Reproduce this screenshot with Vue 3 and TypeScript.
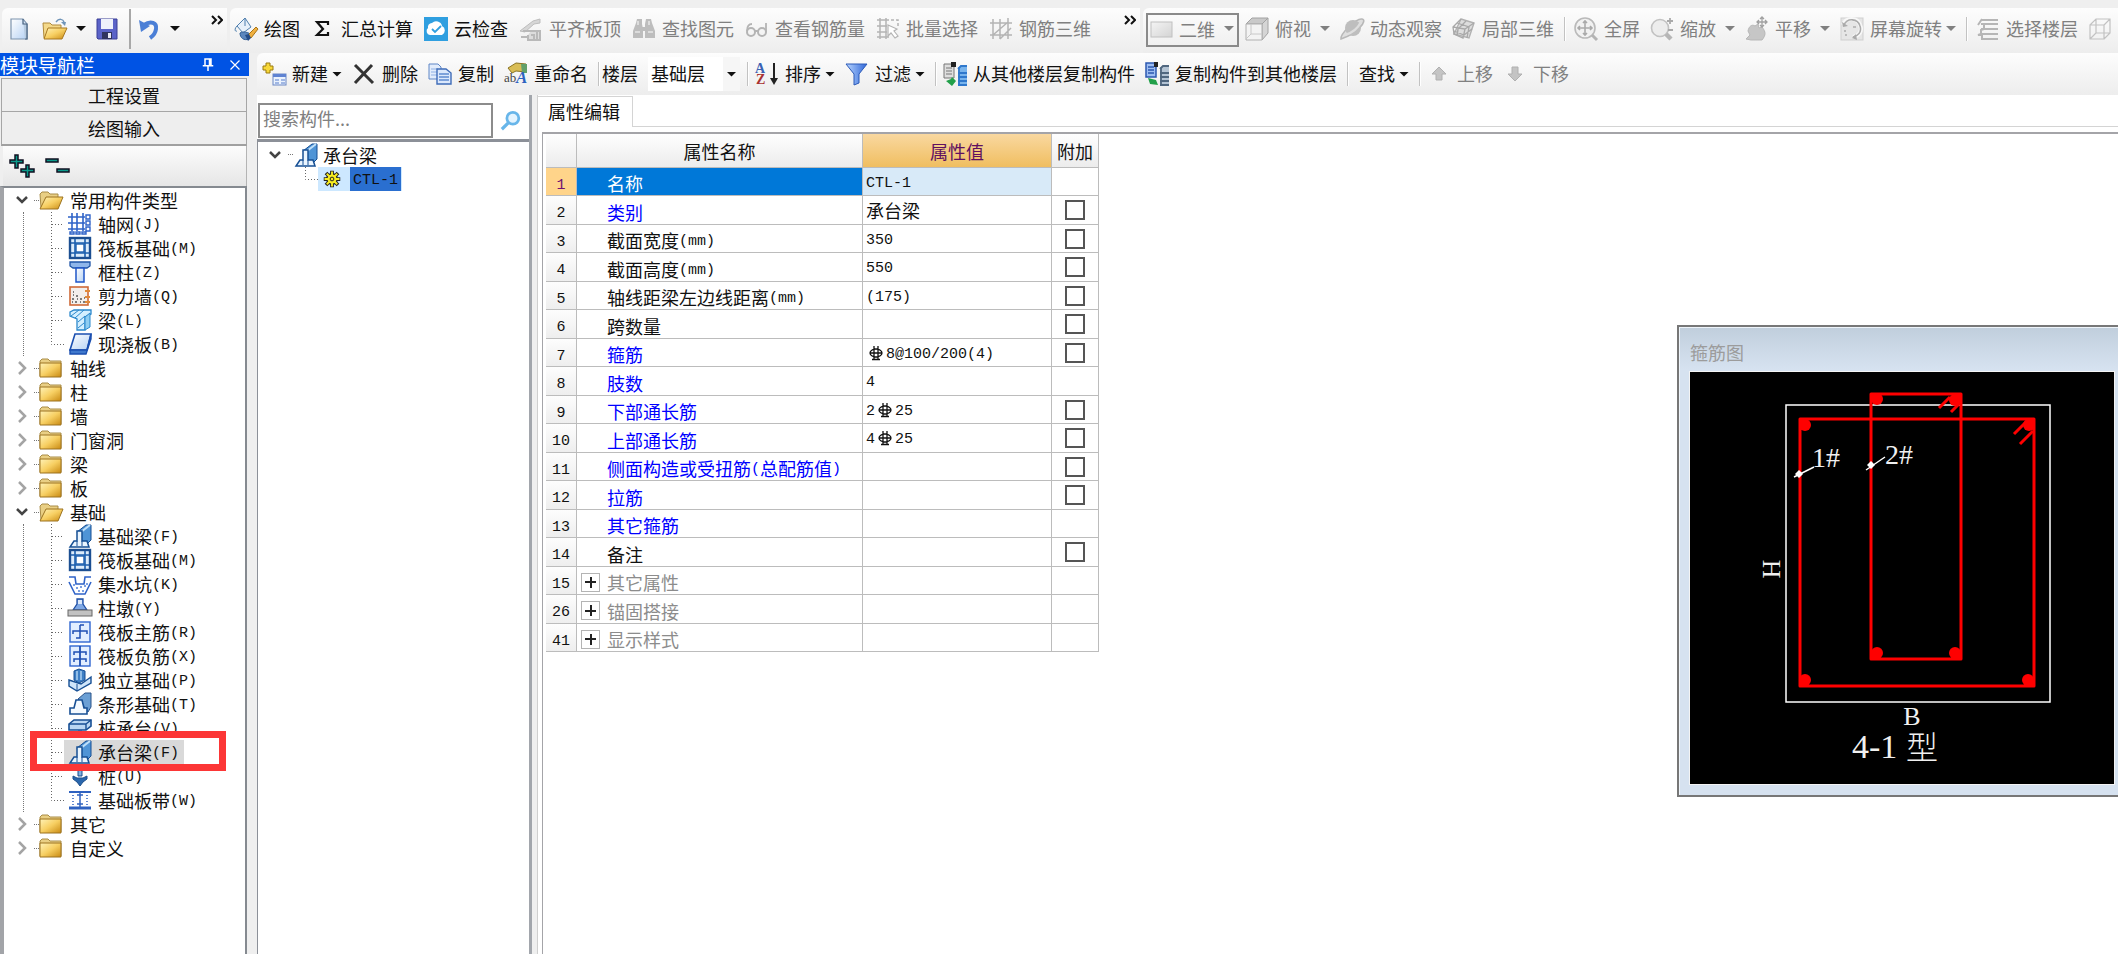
<script setup lang="ts">
import { ref } from 'vue'

interface Tool {
  kind: 'item' | 'sep' | 'floor' | 'view'
  label?: string
  icon?: string
  off?: boolean
  caret?: 'wide' | 'tight'
}
interface Leaf { label: string; icon: string; selected?: boolean }
interface Group { label: string; open?: boolean; children?: Leaf[] }
interface Prop {
  no: number
  name: string
  value?: string
  tone?: 'blue' | 'gray'
  check?: boolean
  expand?: boolean
}

const item = (label: string, icon = '', off = false, caret?: 'wide' | 'tight'): Tool => ({ kind: 'item', label, icon, off, caret })
const sep: Tool = { kind: 'sep' }

const drawTools: Tool[] = [
  item('绘图', 'paint'),
  item('汇总计算', 'sigma'),
  item('云检查', 'cloud'),
  item('平齐板顶', 'level', true),
  item('查找图元', 'binoculars', true),
  item('查看钢筋量', 'glasses', true),
  item('批量选择', 'batch', true),
  item('钢筋三维', 'mesh', true),
]
const viewTools: Tool[] = [
  { kind: 'view' },
  item('俯视', 'cubeTop', true, 'wide'),
  item('动态观察', 'orbit', true),
  item('局部三维', 'rubik', true),
  sep,
  item('全屏', 'full', true),
  item('缩放', 'zoom', true, 'wide'),
  item('平移', 'hand', true, 'wide'),
  item('屏幕旋转', 'rotate', true, 'tight'),
  sep,
  item('选择楼层', 'floors', true),
  item('线框', 'cubeWire', true),
]
const componentTools: Tool[] = [
  item('新建', 'create', false, 'tight'),
  item('删除', 'remove'),
  item('复制', 'copy'),
  item('重命名', 'rename'),
  sep,
  { kind: 'floor' },
  sep,
  item('排序', 'sort', false, 'tight'),
  item('过滤', 'filter', false, 'tight'),
  sep,
  item('从其他楼层复制构件', 'copyFrom'),
  item('复制构件到其他楼层', 'copyTo'),
  sep,
  item('查找', '', false, 'tight'),
  sep,
  item('上移', 'up', true),
  item('下移', 'down', true),
]

const groups: Group[] = [
  {
    label: '常用构件类型', open: true, children: [
      { label: '轴网(J)', icon: 'axis' },
      { label: '筏板基础(M)', icon: 'raft' },
      { label: '框柱(Z)', icon: 'column' },
      { label: '剪力墙(Q)', icon: 'wall' },
      { label: '梁(L)', icon: 'beam' },
      { label: '现浇板(B)', icon: 'slab' },
    ],
  },
  { label: '轴线' },
  { label: '柱' },
  { label: '墙' },
  { label: '门窗洞' },
  { label: '梁' },
  { label: '板' },
  {
    label: '基础', open: true, children: [
      { label: '基础梁(F)', icon: 'capBeam' },
      { label: '筏板基础(M)', icon: 'raft' },
      { label: '集水坑(K)', icon: 'sump' },
      { label: '柱墩(Y)', icon: 'pier' },
      { label: '筏板主筋(R)', icon: 'mainBar' },
      { label: '筏板负筋(X)', icon: 'negBar' },
      { label: '独立基础(P)', icon: 'pad' },
      { label: '条形基础(T)', icon: 'strip' },
      { label: '桩承台(V)', icon: 'pileCap' },
      { label: '承台梁(F)', icon: 'capBeam', selected: true },
      { label: '桩(U)', icon: 'pile' },
      { label: '基础板带(W)', icon: 'band' },
    ],
  },
  { label: '其它' },
  { label: '自定义' },
]

const props: Prop[] = [
  { no: 1, name: '名称', value: 'CTL-1' },
  { no: 2, name: '类别', value: '承台梁', tone: 'blue', check: true },
  { no: 3, name: '截面宽度(mm)', value: '350', check: true },
  { no: 4, name: '截面高度(mm)', value: '550', check: true },
  { no: 5, name: '轴线距梁左边线距离(mm)', value: '(175)', check: true },
  { no: 6, name: '跨数量', check: true },
  { no: 7, name: '箍筋', value: '~8@100/200(4)', tone: 'blue', check: true },
  { no: 8, name: '肢数', value: '4', tone: 'blue' },
  { no: 9, name: '下部通长筋', value: '2~25', tone: 'blue', check: true },
  { no: 10, name: '上部通长筋', value: '4~25', tone: 'blue', check: true },
  { no: 11, name: '侧面构造或受扭筋(总配筋值)', tone: 'blue', check: true },
  { no: 12, name: '拉筋', tone: 'blue', check: true },
  { no: 13, name: '其它箍筋', tone: 'blue' },
  { no: 14, name: '备注', check: true },
  { no: 15, name: '其它属性', tone: 'gray', expand: true },
  { no: 26, name: '锚固搭接', tone: 'gray', expand: true },
  { no: 41, name: '显示样式', tone: 'gray', expand: true },
]

const keyword = ref('')
const floor = ref('基础层')
const view = ref('二维')

/** Splits a label into wide, half-width and rebar-mark ("~") runs. */
function runs(text = ''): { text: string; type: 'wide' | 'half' | 'bar' }[] {
  return text.split(/(~|[!-}]+)/).filter(Boolean).map(part => ({
    text: part,
    type: part === '~' ? 'bar' : /^[!-}]/.test(part) ? 'half' : 'wide',
  }))
}

const g = 'fill="none" stroke="#b4b4b4" stroke-width="1.5"'

const icons: Record<string, string> = {
  newDoc: '<path d="M4 2h12l4 5v15H4z" fill="url(#gPage)" stroke="#7c93ad" stroke-width="1.2"/><path d="M16 2v5h4v15h-2" fill="#b7cbe0" stroke="#47617f" stroke-width="1.2"/>',
  open: '<path d="M0 6h7l2 2h9v13H1z" fill="#f4d98a" stroke="#b08a3a"/><path d="M5 11h19l-5 11H1z" fill="url(#gGold)" stroke="#a87820"/><path d="M13 5c3-4 7-3 8 0" fill="none" stroke="#6f94b8" stroke-width="1.5"/><path d="M18 5h5l-1 4z" fill="#6f94b8"/>',
  save: '<path d="M2 2h20v20H3l-1-1z" fill="#5b63c8" stroke="#3a3f96"/><rect x="6" y="2" width="12" height="10" fill="#eef1fb"/><path d="M7 15h10v7H7z" fill="#30345f"/><path d="M13 16h3v5h-3z" fill="#e9e9f5"/>',
  undo: '<path d="M7 8c7-5 13-2 12 4-.5 4-3 7-6 9" fill="none" stroke="#4b7fd6" stroke-width="4"/><path d="M2 3l2 12 9-6z" fill="#4b7fd6"/>',
  paint: '<path d="M3 9l8-8 6 9-8 6z" fill="#e7f0fa" stroke="#4f7fae"/><path d="M11 1v8M3 9c-3 3-2 6 0 5" fill="none" stroke="#4f7fae"/><path d="M6 16c3-2 8-1 12 2l-3 4c-5 2-9-1-9-6z" fill="#5b86bd" stroke="#2f5d96"/><path d="M14 18l8-8 2 2-7 9z" fill="#f0b040" stroke="#a97516"/><path d="M11 18l4-1 2 4-3 3z" fill="#244b86"/>',
  sigma: '<path d="M17 8V5H6l6 7-6 6h11v-3" fill="none" stroke="#111" stroke-width="2.2"/>',
  cloud: '<rect width="24" height="24" fill="#2f9fe0"/><path d="M6 18a4 4 0 0 1-2-7 4 4 0 0 1 4-5 6 6 0 0 1 10 3 5 5 0 0 1 0 9z" fill="#fff"/><path d="M8 12l3 3 6-6" fill="none" stroke="#2f9fe0" stroke-width="1.8"/>',
  level: '<path d="M1 14L14 4l7-2v4l-6 1-9 8z" fill="#d6d6d6" stroke="#bdbdbd"/><path d="M12 14h9v9H9v-5" fill="#dcdcdc" stroke="#b9b9b9" stroke-width="2"/><path d="M4 14l8 0M12 18h3v4M18 15v7M2 20h6" stroke="#b9b9b9" stroke-width="2" fill="none"/>',
  binoculars: '<path d="M5 2h5v5l1 5v9H1v-7L4 6zM14 2h5l1 4 3 8v7H13V7z" fill="#bdbdbd"/><path d="M10 10h4v4h-4z" fill="#bdbdbd"/><path d="M3 15h5M16 15h5M6 4v4M17 4v4" stroke="#e6e6e6" stroke-width="1.5"/>',
  glasses: '<circle cx="6" cy="15" r="4" fill="none" stroke="#b4b4b4" stroke-width="2"/><circle cx="17" cy="15" r="4" fill="none" stroke="#b4b4b4" stroke-width="2"/><path d="M10 14h3M2 14c0-5 2-7 5-7M21 15V6" fill="none" stroke="#b4b4b4" stroke-width="1.8"/>',
  batch: `<path d="M1 3h12M1 9h10M1 15h10M1 20h12M4 1v21M10 1v21" ${g}/><path d="M12 8l9 4-3 2 4 5-3 2-4-5-3 3z" fill="#fff" stroke="#b4b4b4" stroke-width="1.2"/><path d="M15 3h7v6" ${g} stroke-dasharray="3 2"/>`,
  mesh: `<path d="M1 6h22M1 18h22M4 2v20M11 2v20M19 1v21M4 18L19 5M11 22l11-11" ${g}/>`,
  plane: '<rect x="1" y="5" width="21" height="15" fill="url(#gGray)" stroke="#c0c0c0"/>',
  cubeTop: '<path d="M1 7l6-6h16l-6 6z" fill="#c9c9c9" stroke="#a2a2a2"/><path d="M17 7l6-6v15l-6 7z" fill="#d5d5d5" stroke="#a2a2a2"/><path d="M1 7h16v16H1z" fill="#f3f3f3" stroke="#b0b0b0"/><path d="M6 7v10l-5 5M6 17h11" fill="none" stroke="#c8c8c8"/>',
  orbit: '<path d="M1 22C0 17 16 1 22 2s-4 14-21 20z" fill="#dedede" stroke="#b8b8b8" stroke-width="1.6"/><circle cx="13" cy="11" r="8" fill="#bebebe"/><path d="M5 18c7-2 13-7 16-13" stroke="#dedede" fill="none" stroke-width="2.4"/>',
  rubik: '<path d="M9 2l13 4-5 15L2 17z" fill="#ddd" stroke="#b2b2b2" stroke-width="1.4"/><path d="M9 2L1 10l1 7 9 4 2-9L1 10M13 12l9-6M6 13l-1 6M5 6l12 4-2 11M14 4l-8 8-1 6M2 14l10 4 8-6" fill="none" stroke="#a8a8a8" stroke-width="1.3"/>',
  full: '<circle cx="11" cy="11" r="10" fill="#f1f1f1" stroke="#bababa" stroke-width="1.6"/><path d="M11 4v14M4 11h14M9 6l2-2 2 2M9 16l2 2 2-2M6 9l-2 2 2 2M16 9l2 2-2 2" fill="none" stroke="#aaa" stroke-width="1.6"/><path d="M18 18l5 5" stroke="#b4b4b4" stroke-width="3"/>',
  zoom: '<circle cx="10" cy="11" r="8.5" fill="#ededed" stroke="#c2c2c2" stroke-width="1.6"/><path d="M16 17l5 5" stroke="#b6b6b6" stroke-width="4.5"/><path d="M17 4h6M20 1v6M18 13h5" stroke="#aaa" stroke-width="1.8"/>',
  hand: '<path d="M3 14c1-5 4-7 7-5l3-2 1 4 3-1c4 5 4 8 0 13H6l-5-1 4-4z" fill="#c6c6c6" stroke="#b7b7b7"/><path d="M17 0v10M12 5h10M15 2l2-2 2 2M15 8l2 2 2-2M20 3l2 2-2 2M14 3l-2 2 2 2" fill="none" stroke="#a0a0a0" stroke-width="1.3"/>',
  rotate: '<rect x="1" y="1" width="22" height="22" fill="#e6e6e6" stroke="#cfcfcf"/><path d="M3 8a9 9 0 0 1 17 0c3 6-1 11-7 12" fill="none" stroke="#f8f8f8" stroke-width="4"/><path d="M4 8a8.500 8.500 0 0 1 16 1c2 6-2 10-7 11" fill="none" stroke="#acacac" stroke-width="1.6"/><path d="M2 5l1 5 5-1zM16 17l-4 4 5 2z" fill="#aaa"/><path d="M5 18h2M4 14h2M13 10h3" stroke="#bbb" stroke-width="2"/>',
  floors: '<path d="M5 3h17M5 7h17M2 8L6 2M5 12h17M5 17h17M5 22h17M8 7v5l-3 1v4l-3 1h4v4" fill="none" stroke="#b6b6b6" stroke-width="2"/>',
  cubeWire: '<path d="M2 8h14v14H2zM2 8l6-6h14v14l-6 6M16 8l6-6M8 2v14l-6 6M8 16h14" fill="none" stroke="#c2c2c2" stroke-width="1.2"/>',
  create: '<rect x="11" y="12" width="13" height="11" fill="#eaf2fd" stroke="#6b87c4"/><path d="M11 12h13v3H11z" fill="#5f83d2"/><path d="M13 18h4M13 21h4M19 18h4M19 21h4" stroke="#88a4dc" stroke-width="1.5"/><path d="M4 1h4v3h3v4H8v3H4V8H1V4h3z" fill="#f7d838" stroke="#9a7a10"/>',
  remove: '<path d="M3 3l18 18M20 3L3 21" stroke="#333" stroke-width="3"/>',
  copy: '<path d="M1 2h9l3 3v12H1z" fill="#e2ecfb" stroke="#5f86c6"/><path d="M3 7h7M3 10h7M3 13h7" stroke="#8fb0e4"/><path d="M9 7h9l5 4v11H9z" fill="#dbe8fc" stroke="#3f6cb8" stroke-width="1.4"/><path d="M11 12h10M11 15h10M11 18h10" stroke="#5f8ad0" stroke-width="1.6"/>',
  rename: '<path d="M4 6l8-5 10 1v8l-10-1-4 2z" fill="#d9bd55" stroke="#8a7424"/><path d="M17 2h6v9h-5z" fill="#62a06a"/><text x="0" y="20" font-family="Liberation Serif" font-size="13" fill="#444">ab</text><text x="12" y="21" font-family="Liberation Serif" font-size="17" font-weight="bold" font-style="italic" fill="#2c62c0">A</text>',
  sort: '<text x="0" y="11" font-family="Liberation Serif" font-size="14" font-weight="bold" fill="#3b62b4">A</text><text x="1" y="22" font-family="Liberation Serif" font-size="14" font-weight="bold" fill="#a83232">Z</text><path d="M19 1v18" stroke="#222" stroke-width="2"/><path d="M15 16h8l-4 7z" fill="#222"/>',
  filter: '<path d="M1 2h21l-8 10v9l-5 2V12z" fill="url(#gBlue)" stroke="#2c5ab8"/>',
  copyFrom: '<path d="M1 2h10v14H1z" fill="#dedede" stroke="#777"/><path d="M8 0h5v5H8z" fill="#222"/><path d="M3 6h6M3 9h6M3 12h6" stroke="#777"/><path d="M3 19l5-2 1-2 4 4-4 5z" fill="#22a04a"/><path d="M15 6l3-3h6v20h-9z" fill="#79b4ec"/><path d="M15 7l3-3h6M15 11h9M15 15h9M15 19h9M15 23h9M16 5v18" fill="none" stroke="#2f78cc" stroke-width="1.8"/>',
  copyTo: '<path d="M1 1h10v14H1z" fill="#9dbdf2" stroke="#2c58b0" stroke-width="1.5"/><path d="M9 0h4v5H9z" fill="#222"/><path d="M3 5h6M3 8h6M3 11h6" stroke="#2c58b0" stroke-width="1.4"/><path d="M3 16l8 2 2 5-8-1z" fill="#22a04a"/><path d="M15 6l3-3h6v20h-9z" fill="#b4c4d4"/><path d="M15 7l3-3h6M15 11h9M15 15h9M15 19h9M15 23h9M16 5v18" fill="none" stroke="#50677f" stroke-width="1.8"/>',
  up: '<path d="M12 5l7 7h-4v6H9v-6H5z" fill="#c4c4c4" stroke="#b0b0b0"/>',
  down: '<path d="M12 19l7-7h-4V5H9v7H5z" fill="#c4c4c4" stroke="#b0b0b0"/>',
  expandAll: '<path d="M5 1h3v5h5v3H8v5H5V9H0V6h5z" fill="#0a9a8a" stroke="#112" stroke-width="1.5"/><path d="M16 11h3v4h5v3h-5v5h-3v-5h-5v-3h5z" fill="#0a9a8a" stroke="#112" stroke-width="1.5"/>',
  collapseAll: '<path d="M1 5h12v3H1zM12 15h12v3H12z" fill="#0a9a8a" stroke="#112" stroke-width="1.5"/>',
  search: '<circle cx="14" cy="9" r="6.5" fill="#e4f4ff" stroke="#68b6ea" stroke-width="3"/><path d="M9 14l-7 7" stroke="#68b6ea" stroke-width="3.5"/>',
  folder: '<path d="M1 5l2-2h6l2 2h11v15H1z" fill="#e9cf84" stroke="#a98c46"/><path d="M1 7h21v14H1z" fill="url(#gGold)" stroke="#9c7320"/>',
  folderOpen: '<path d="M1 6l2-2h6l2 2h8v14H2z" fill="#e9cf84" stroke="#a98c46"/><path d="M7 9h17l-5 12H1z" fill="url(#gGold)" stroke="#9c7320"/>',
  axis: '<path d="M0 5h17M0 11h17M0 17h17M4 1v18M9 1v18M15 1v18" fill="none" stroke="#2f63c8" stroke-width="1.6"/><path d="M18 3h4v4h-4zM18 9h4v4h-4zM18 15h4v4h-4zM2 20h4v2H2zM8 20h4v2H8zM14 20h4v2h-4z" fill="#fff" stroke="#2f63c8" stroke-width="1.4"/>',
  raft: '<rect x="2" y="2" width="20" height="20" fill="#dcecfb" stroke="#1c4f92" stroke-width="2.4"/><path d="M7 3v18M17 3v18M3 7h18M3 17h18" stroke="#1c5fae" stroke-width="1.6"/><rect x="8" y="8" width="8" height="8" fill="#fff" stroke="#1c5fae" stroke-width="1.4"/>',
  column: '<path d="M2 2h20v4l-3 2H5L2 6z" fill="#8fb6ea" stroke="#1f55a8" stroke-width="1.3"/><path d="M8 8h8v14H8z" fill="url(#gPage)" stroke="#1f55c8" stroke-width="1.5"/>',
  wall: '<rect x="2" y="3" width="18" height="18" fill="#f3efeb" stroke="#cf6a38" stroke-width="1.6"/><path d="M5 8h1M8 12h2M4 15h2M12 15h2M7 18h2M12 18h1M15 18h2M5 11h1M16 14h1M9 15h1M4 18h1" stroke="#555" stroke-width="1.4"/><path d="M17 7h5M17 13h5M17 18h5" stroke="#e08a3a" stroke-width="2"/>',
  beam: '<path d="M2 4l4-2h17v4l-6 3v13H9V11L2 8z" fill="#d4efff" stroke="#2b88cc" stroke-width="1.3"/><path d="M3 8l8-6M7 10l9-8M10 14l7-6M10 20l6-5M17 9l5-4v14l-5 3z" fill="#8ecdf2" stroke="#2b88cc"/>',
  slab: '<path d="M7 2h16l-4 16H2z" fill="url(#gPage)" stroke="#1b4fb0" stroke-width="1.6"/><path d="M2 18h17l4-16v5l-5 15H2z" fill="#3f78cc" stroke="#1b4fb0" stroke-width="1.4"/>',
  capBeam: '<path d="M9 8l9-7h5v15l-6 6z" fill="#4f94d6" stroke="#164f94"/><path d="M13 8l9-7" stroke="#bfe0fa" stroke-width="2"/><path d="M9 7h5v10h5l2 6H2l4-6h3z" fill="#eaf5ff" stroke="#164f94" stroke-width="1.5"/><path d="M9 17v5M14 17v5" stroke="#164f94"/>',
  sump: '<path d="M1 5h6l1 7h8l1-7h6M1 10l6 12h10l6-12" fill="none" stroke="#2f63c8" stroke-width="1.6"/><path d="M5 13h2M8 16h2M12 15h2M16 14h2M10 19h2M14 19h2M18 12h2" stroke="#4f7fd8" stroke-width="1.6"/>',
  pier: '<path d="M9 3h6v5l4 6H5l4-6z" fill="#7fa8e4" stroke="#1f4fa4" stroke-width="1.3"/><path d="M10 4h4v4h-4z" fill="#dce9fa"/><rect x="0" y="14" width="24" height="6" fill="#c2c2c2" stroke="#666"/>',
  mainBar: '<rect x="2" y="2" width="20" height="20" fill="#e2eeff" stroke="#2f66d0" stroke-width="1.4"/><path d="M5 14v-3h14v3M12 5h4M12 5v13h-4" fill="none" stroke="#1f4fb4" stroke-width="1.5"/>',
  negBar: '<rect x="2" y="2" width="20" height="20" fill="#e2eeff" stroke="#2f66d0" stroke-width="1.4"/><path d="M12 2v20" stroke="#1f4fb4" stroke-width="1.8"/><path d="M6 11V8h12v3M6 18v-3h12v3" fill="none" stroke="#1f4fb4" stroke-width="1.5"/>',
  pad: '<path d="M1 12l12 4 10-7v6l-14 8-8-5z" fill="#cfe5fa" stroke="#164f94" stroke-width="1.4"/><path d="M6 3l5-2 6 2v9l-6 3-5-3z" fill="#3f7fc4" stroke="#164f94"/><path d="M9 3v9M13 3v9" stroke="#b6d8f6" stroke-width="1.4"/><path d="M9 16v6" stroke="#164f94"/>',
  strip: '<path d="M10 7l7-6h6v14l-3 5z" fill="#6b9fd4" stroke="#2b5288"/><path d="M8 8h6l2 8h3v6H2v-6h4z" fill="#f3f9ff" stroke="#174f94" stroke-width="1.6"/>',
  pileCap: '<path d="M1 8l5-4h17v6l-5 4H1z" fill="#b9d6f2" stroke="#174f94" stroke-width="1.6"/><path d="M1 8h17v6M18 8l5-4" fill="none" stroke="#174f94" stroke-width="1.4"/><path d="M10 14h4v5l-2 3-2-3z" fill="#2d64a8"/>',
  pile: '<path d="M10 1h4v11h-4z" fill="#7fb0e0" stroke="#1c4f8c"/><path d="M5 12l4 2h6l4-2v3l-4 3-3 4-3-4-4-3z" fill="#2a66ac" stroke="#1c4f8c"/>',
  band: '<path d="M1 4h22" stroke="#2f62c0" stroke-width="2"/><path d="M1 20h22" stroke="#2f62c0" stroke-width="3"/><path d="M12 4v15M9 7h6M9 16h6" stroke="#2f62c0" stroke-width="1.5"/><path d="M5 4v16M19 4v16" stroke="#2f62c0" stroke-dasharray="1 2" stroke-width="1.5"/>',
  gear: '<path d="M12 1v22M1 12h22M4 4l16 16M20 4L4 20" stroke="#222" stroke-width="5"/><circle cx="12" cy="12" r="8" fill="#222"/><path d="M12 2v20M2 12h20M5 5l14 14M19 5L5 19" stroke="#f8ec20" stroke-width="2.500"/><circle cx="12" cy="12" r="6" fill="#f8ec20"/><circle cx="12" cy="12" r="2.500" fill="#f8ec20" stroke="#222" stroke-width="1.300"/>',
  pin: '<path d="M8 4h8v9H8zM5 13h14M12 13v7M14 4v9" fill="none" stroke="#fff" stroke-width="2"/>',
  close: '<path d="M6 6l12 12M18 6L6 18" stroke="#fff" stroke-width="1.6"/>',
}

const quick = [
  { icon: 'newDoc', name: '新建工程' },
  { icon: 'open', name: '打开', caret: true },
  { icon: 'save', name: '保存', line: true },
  { icon: 'undo', name: '撤销', caret: true },
]
</script>

<template>
  <div class="app">
    <svg class="defs" aria-hidden="true">
      <defs>
        <linearGradient id="gGold" x1="0" y1="0" x2="1" y2="1"><stop offset="0" stop-color="#fff3b8" /><stop offset=".5" stop-color="#f7cf62" /><stop offset="1" stop-color="#c98a12" /></linearGradient>
        <linearGradient id="gPage" x1="0" y1="0" x2="1" y2="1"><stop offset="0" stop-color="#fff" /><stop offset="1" stop-color="#b6d2f4" /></linearGradient>
        <linearGradient id="gBlue" x1="0" y1="0" x2="1" y2="0"><stop offset="0" stop-color="#b9d6ff" /><stop offset="1" stop-color="#2f66d8" /></linearGradient>
        <linearGradient id="gGray" x1="0" y1="0" x2="1" y2="1"><stop offset="0" stop-color="#f4f4f4" /><stop offset="1" stop-color="#d4d4d4" /></linearGradient>
      </defs>
    </svg>

    <header class="top">
      <div class="bar quick">
        <button v-for="q in quick" :key="q.icon" class="tool" :class="{ line: q.line }" :aria-label="q.name">
          <svg class="icon" viewBox="0 0 24 24" v-html="icons[q.icon]" />
          <span v-if="q.caret" class="caret wide" />
        </button>
        <button class="more" aria-label="更多">
          <svg viewBox="0 0 12 10"><path d="M1 1l4 4-4 4M7 1l4 4-4 4" fill="none" stroke="#111" stroke-width="2" /></svg>
        </button>
      </div>
      <div v-for="(set, s) in [drawTools, viewTools]" :key="s" class="bar" :class="s ? 'views' : 'draws'">
        <template v-for="(t, i) in set" :key="i">
          <i v-if="t.kind === 'sep'" class="sep" />
          <label v-else-if="t.kind === 'view'" class="view-box">
            <svg class="icon" viewBox="0 0 24 24" v-html="icons.plane" />
            <select v-model="view" aria-label="视图"><option>二维</option><option>三维</option></select>
            <span class="caret" />
          </label>
          <button v-else class="tool" :class="{ off: t.off }">
            <svg class="icon" viewBox="0 0 24 24" v-html="icons[t.icon ?? '']" />
            <span class="cap">{{ t.label }}</span>
            <span v-if="t.caret" class="caret" :class="t.caret" />
          </button>
        </template>
        <button v-if="!s" class="more" aria-label="更多">
          <svg viewBox="0 0 12 10"><path d="M1 1l4 4-4 4M7 1l4 4-4 4" fill="none" stroke="#111" stroke-width="2" /></svg>
        </button>
      </div>
    </header>

    <div class="main">
      <aside class="nav">
        <div class="nav-title">
          <span>模块导航栏</span>
          <button aria-label="固定"><svg viewBox="0 0 24 24" v-html="icons.pin" /></button>
          <button aria-label="关闭"><svg viewBox="0 0 24 24" v-html="icons.close" /></button>
        </div>
        <button class="nav-tab">工程设置</button>
        <button class="nav-tab last">绘图输入</button>
        <div class="nav-tools">
          <button aria-label="全部展开"><svg class="icon" viewBox="0 0 24 24" v-html="icons.expandAll" /></button>
          <button aria-label="全部折叠"><svg class="icon" viewBox="0 0 24 24" v-html="icons.collapseAll" /></button>
        </div>
        <ul class="tree">
          <li v-for="grp in groups" :key="grp.label">
            <button class="group">
              <svg class="chev" viewBox="0 0 14 14">
                <path v-if="grp.open" d="M2 4l5 5 5-5" fill="none" stroke="#444" stroke-width="2.500" />
                <path v-else d="M4 1l6 6-6 6" fill="none" stroke="#a4a4a4" stroke-width="2.500" />
              </svg>
              <i class="stub" />
              <svg class="icon" viewBox="0 0 24 24" v-html="icons[grp.open ? 'folderOpen' : 'folder']" />
              <span>{{ grp.label }}</span>
            </button>
            <ul v-if="grp.children" class="kids">
              <li v-for="(kid, k) in grp.children" :key="kid.label">
                <svg class="elbow" viewBox="0 0 13 24">
                  <path :d="k === grp.children.length - 1 ? 'M.5 0V12.500H13' : 'M.5 0V24M1 12.500H13'" fill="none" stroke="#666" stroke-dasharray="1 2" />
                </svg>
                <button class="leaf" :class="{ selected: kid.selected }">
                  <svg class="icon" viewBox="0 0 24 24" v-html="icons[kid.icon]" />
                  <span class="text"><span v-for="(r, n) in runs(kid.label)" :key="n" :class="r.type">{{ r.text }}</span></span>
                </button>
                <i v-if="kid.selected" class="mark" />
              </li>
            </ul>
          </li>
        </ul>
      </aside>

      <section class="work">
        <div class="bar second">
          <template v-for="(t, i) in componentTools" :key="i">
            <i v-if="t.kind === 'sep'" class="sep" />
            <label v-else-if="t.kind === 'floor'" class="floor">
              <span class="cap">楼层</span>
              <span class="floor-box">
                <select v-model="floor"><option>基础层</option><option>首层</option></select>
                <span class="drop"><span class="caret" /></span>
              </span>
            </label>
            <button v-else class="tool" :class="{ off: t.off, bare: !t.icon }">
              <svg v-if="t.icon" class="icon" viewBox="0 0 24 24" v-html="icons[t.icon]" />
              <span class="cap">{{ t.label }}</span>
              <span v-if="t.caret" class="caret" :class="t.caret" />
            </button>
          </template>
        </div>

        <div class="panes">
          <div class="finder">
            <div class="search">
              <input v-model="keyword" type="text" placeholder="搜索构件..." aria-label="搜索构件">
              <button aria-label="搜索"><svg class="icon" viewBox="0 0 24 24" v-html="icons.search" /></button>
            </div>
            <div class="result">
              <button class="root">
                <svg class="chev" viewBox="0 0 14 14"><path d="M2 4l5 5 5-5" fill="none" stroke="#444" stroke-width="2.500" /></svg>
                <i class="stub" />
                <svg class="icon" viewBox="0 0 24 24" v-html="icons.capBeam" />
                <span>承台梁</span>
              </button>
              <button class="hit">
                <svg class="elbow" viewBox="0 0 13 24"><path d="M.5 0V12.500H13" fill="none" stroke="#666" stroke-dasharray="1 2" /></svg>
                <span class="sun"><svg class="icon" viewBox="0 0 24 24" v-html="icons.gear" /></span>
                <span class="tag"><span class="half">CTL-1</span></span>
              </button>
            </div>
          </div>

          <div class="editor">
            <div class="tabs"><button class="tab">属性编辑</button></div>
            <div class="sheet">
              <table>
                <colgroup><col class="c-no"><col class="c-name"><col class="c-value"><col class="c-add"></colgroup>
                <thead>
                  <tr><th /><th>属性名称</th><th class="hot">属性值</th><th>附加</th></tr>
                </thead>
                <tbody>
                  <tr v-for="p in props" :key="p.no" :class="{ current: p.no === 1 }">
                    <th scope="row"><span class="half">{{ p.no }}</span></th>
                    <td class="name" :class="p.tone">
                      <div class="cell">
                        <span class="slot"><button v-if="p.expand" class="plus" :aria-label="'展开' + p.name" /></span>
                        <span class="text"><span v-for="(r, n) in runs(p.name)" :key="n" :class="r.type">{{ r.text }}</span></span>
                      </div>
                    </td>
                    <td class="value">
                      <div class="cell">
                        <template v-for="(r, n) in runs(p.value)" :key="n">
                          <svg v-if="r.type === 'bar'" class="rebar" viewBox="0 0 20 16"><path d="M4 8a6 4 0 1 0 12 0a6 4 0 1 0-12 0M8 1v13M12 1v13M4 8h12M6 14.500h8" fill="none" stroke="#111" stroke-width="1.300" /></svg>
                          <span v-else :class="r.type">{{ r.text }}</span>
                        </template>
                      </div>
                    </td>
                    <td class="check"><input v-if="p.check" type="checkbox" :aria-label="p.name + ' 附加'"></td>
                  </tr>
                </tbody>
              </table>
            </div>
          </div>
        </div>
      </section>
    </div>

    <section class="popup">
      <h2>箍筋图</h2>
      <svg class="canvas" viewBox="0 0 424 412">
        <rect width="424" height="412" fill="#000" />
        <rect x="96" y="33" width="264" height="297" fill="none" stroke="#fff" stroke-width="1.500" />
        <g fill="none" stroke="#f00" stroke-width="3" stroke-linejoin="round">
          <rect x="110" y="47" width="234" height="267" />
          <rect x="181" y="22" width="90" height="265" />
          <path d="M338 48l-14 14M343 59l-13 13M260 25l-11 11M271 30l-10 10" />
        </g>
        <g fill="#f00">
          <circle cx="115" cy="53" r="6" /><circle cx="339" cy="53" r="6" /><circle cx="115" cy="308" r="6" /><circle cx="338" cy="308" r="6" />
          <circle cx="187" cy="27" r="6" /><circle cx="265" cy="28" r="6" /><circle cx="187" cy="281" r="6" /><circle cx="265" cy="281" r="6" />
          <path d="M110 47h8v8h-8zM336 47h8v8h-8zM181 22h10v8h-10zM262 22h9v10h-9zM110 306h6v8h-6zM338 306h6v8h-6zM181 279h6v8h-6zM265 279h6v8h-6z" />
        </g>
        <path d="M104 105l20-10M176 98l19-13" stroke="#fff" stroke-width="1.500" />
        <path d="M105 102l4-4 4 4-4 4zM177 93l4-4 4 4-4 4z" fill="#fff" />
        <g class="ink">
          <text x="122" y="95" font-size="28">1#</text>
          <text x="195" y="92" font-size="28">2#</text>
          <text x="222" y="353" font-size="26" text-anchor="middle">B</text>
          <text transform="translate(90 197) rotate(-90)" font-size="26" text-anchor="middle">H</text>
          <text x="162" y="386" font-size="34">4-1</text>
          <text class="han" x="216" y="387" font-size="32">型</text>
        </g>
      </svg>
    </section>
  </div>
</template>

<style>
html, body { margin: 0; overflow: hidden; background: #fff; }
</style>

<style scoped>
.app {
  position: relative;
  display: flex;
  flex-direction: column;
  height: 100vh;
  overflow: hidden;
  background: #efefef;
  color: #111;
  font: 18px/24px "Noto Sans CJK SC", sans-serif;
}
* { box-sizing: border-box; }
button, select, input { font: inherit; color: inherit; margin: 0; padding: 0; border: 0; background: none; border-radius: 0; }
button { display: flex; align-items: center; white-space: nowrap; text-align: left; }
ul { list-style: none; margin: 0; padding: 0; }
.defs { position: absolute; width: 0; height: 0; }
.icon { width: 24px; height: 24px; flex: none; overflow: visible; }
.half { font-family: "Liberation Mono", monospace; font-size: 15px; line-height: 16px; }
.text { display: flex; align-items: center; }
.text .half, .value .half, .tag .half { padding-top: 4px; }

.top { display: flex; gap: 3px; flex: none; padding: 8px 0 0 2px; white-space: nowrap; }
.bar { display: flex; align-items: center; gap: 10px; flex: none; background: linear-gradient(#fdfdfd, #ededed); border-radius: 6px 0 0 0; }
.top .bar { height: 45px; padding-bottom: 4px; }
.top .quick { width: 225px; padding-left: 5px; gap: 6px; }
.quick .line { border-right: 2px solid #a8a8a8; height: 40px; padding-right: 6px; }
.top .draws { width: 910px; padding-left: 4px; gap: 11px; }
.top .views { flex: 1 1 0; min-width: 0; overflow: hidden; padding-left: 3px; }
.tool { flex: none; }
.tool .icon { margin-right: 6px; }
.quick .line .icon { margin-right: 4px; }
.cap { padding-bottom: 2px; }
.off { color: #808080; }
.caret { width: 10px; height: 5px; background: currentColor; clip-path: polygon(0 0, 100% 0, 50% 100%); flex: none; }
.caret.wide { margin-left: 9px; }
.quick .caret.wide { margin: 0 3px; }
.caret.tight { margin-left: 4px; }
.sep { width: 2px; height: 24px; margin-right: -2px; background: #c2c2c2; border-right: 1px solid #fff; flex: none; }
.more { margin-left: auto; margin-right: 4px; align-self: flex-start; padding-top: 7px; }
.more svg { width: 12px; height: 10px; }
.view-box { display: flex; align-items: center; gap: 5px; width: 93px; height: 34px; border: 2px solid #8a8a8a; padding: 0 3px 2px 2px; margin: 2px -4px 0 0; color: #808080; flex: none; }
select { appearance: none; outline: 0; }
.view-box select { flex: 1; width: 38px; height: 24px; }

.main { display: flex; flex: 1; min-height: 0; gap: 8px; }
.nav { display: flex; flex-direction: column; width: 249px; flex: none; }
.nav-title { display: flex; align-items: center; height: 23px; background: #0053e4; color: #fff; font-size: 19px; padding-right: 5px; flex: none; }
.nav-title span { flex: 1; }
.nav-title button { width: 18px; margin-left: 9px; }
.nav-title svg { width: 18px; height: 18px; }
.nav-tab { justify-content: center; height: 33px; flex: none; margin: 0 2px 0 1px; border: 1px solid #a6a6a6; border-bottom: 0; background: #eee; }
.nav-title + .nav-tab { margin-top: 2px; }
.nav-tab.last { height: 35px; border-bottom: 2px solid #a0a0a0; }
.nav-tools { display: flex; gap: 11px; height: 40px; flex: none; margin: 0 2px 0 3px; padding-left: 7px; background: linear-gradient(#fcfcfc, #e6e6e6); border-right: 1px solid #b4b4b4; }
.tree { flex: 1; min-height: 0; overflow: hidden; margin-right: 2px; border: 2px solid #858a90; border-left: 4px solid #a2a4a8; border-bottom: 0; background: #fff; }
.group { height: 24px; padding-left: 11px; }
.chev { width: 14px; height: 14px; flex: none; }
.stub { width: 5px; margin: 0 0 0 5px; border-top: 1px dotted #777; flex: none; }
.group .icon { margin-right: 7px; }
.kids { margin-left: 19px; border-left: 1px dotted #777; }
.kids li { position: relative; display: flex; height: 24px; padding-left: 27px; }
.elbow { width: 13px; height: 24px; flex: none; }
.leaf { height: 24px; padding: 0 5px 0 4px; }
.leaf .icon { margin-right: 6px; }
.leaf.selected { background: #d9d9d9; }
.mark { position: absolute; z-index: 2; left: 6px; top: -9px; width: 196px; height: 40px; border: 7px solid #fc3636; }

.work { display: flex; flex-direction: column; flex: 1; min-width: 0; }
.second { height: 42px; padding-left: 5px; }
.second .sep { margin-right: -4px; }
.bare { margin-left: 4px; }
.floor { display: flex; align-items: center; gap: 10px; margin: 0 -3px 0 -4px; flex: none; }
.floor-box { display: flex; width: 92px; height: 34px; background: #fff; }
.floor-box select { flex: 1; min-width: 0; padding-left: 3px; height: 32px; }
.drop { display: flex; align-items: center; justify-content: center; width: 17px; background: #f6f6f6; }
.panes { display: flex; flex: 1; min-height: 0; gap: 5px; }
.finder { display: flex; flex-direction: column; width: 275px; flex: none; background: #fff; border-right: 3px solid #a2a6ac; }
.search { display: flex; margin: 8px 0 1px 1px; height: 35px; flex: none; }
.search input { flex: 1; min-width: 0; border: 2px solid #8c8c8c; padding: 0 0 5px 3px; outline: 0; }
.search input::placeholder { color: #808080; opacity: 1; }
.search button { justify-content: center; width: 36px; }
.search button .icon { width: 22px; height: 22px; }
.result { flex: 1; border-top: 3px solid #8c9098; border-left: 1px solid #8c9098; }
.root { height: 25px; padding-left: 10px; }
.root .stub { margin-left: 6px; margin-right: 1px; }
.root .icon { margin-right: 5px; }
.hit { height: 24px; padding-left: 47px; }
.sun { display: flex; align-items: center; width: 32px; height: 24px; padding-left: 5px; background: #cde8ff; }
.sun .icon { width: 18px; height: 18px; }
.tag { display: flex; align-items: center; height: 24px; padding: 0 3px; background: #2a6fd0; border-right: 1px solid #cde8ff; }

.editor { display: flex; flex-direction: column; flex: 1; min-width: 0; background: #fff; border-left: 1px solid #cfcfcf; }
.tabs { display: flex; height: 32px; flex: none; padding-top: 1px; }
.tabs::after { content: ""; flex: 1; border-bottom: 1px solid #d4d4d4; }
.tab { width: 95px; padding: 0 0 3px 10px; border: solid #d4d4d4; border-width: 1px 1px 0 0; }
.sheet { flex: 1; min-height: 0; margin: 5px 0 0 4px; border: solid #a4a4a8; border-width: 2px 0 0 1px; padding-left: 3px; }
table { border-collapse: separate; border-spacing: 0; table-layout: fixed; width: 553px; }
.c-no { width: 31px; } .c-name { width: 286px; } .c-value { width: 189px; } .c-add { width: 47px; }
th, td { padding: 0; font-weight: normal; border: solid #bcbcbc; border-width: 0 1px 1px 0; overflow: hidden; white-space: nowrap; }
thead th { height: 34px; background: linear-gradient(#fefefe, #ececec); }
thead .hot { background: linear-gradient(#f9d8a0, #f0be60); color: #601060; }
tbody tr:nth-child(odd) > * { height: 28px; }
tbody tr:nth-child(even) > * { height: 29px; }
tbody th { background: linear-gradient(#fdfdfd, #eee); line-height: 22px; }
.cell { display: flex; align-items: center; height: 24px; }
.name .cell { padding-top: 3px; }
.slot { width: 30px; padding-left: 4px; }
.plus { width: 19px; height: 19px; border: 1px solid #b4b4b4; background: linear-gradient(#222, #222) center / 11px 2px no-repeat, linear-gradient(#222, #222) center / 2px 11px no-repeat, #fff; }
.blue { color: #00f; }
.gray { color: #8c8c8c; }
.value { padding-left: 3px; }
.rebar { width: 20px; height: 16px; flex: none; }
.check { line-height: 0; text-align: center; }
.check input { appearance: none; width: 20px; height: 20px; border: 2px solid #555; background: #fff; vertical-align: middle; }
.current th { background: #ffd48a; color: #701070; }
.current .name { background: #0078d8; color: #fff; }
.current .value { background: #d8eaf8; }

.popup { position: absolute; right: 0; top: 325px; width: 441px; padding: 0 4px 11px 11px; border: 2px solid #777; border-right: 0; background: linear-gradient(#c0cedc, #d6e2f0 42px); box-shadow: inset 1px 1px 0 #eef4fa; }
.popup h2 { margin: 0; padding-top: 13px; height: 45px; font-size: 18px; line-height: 24px; font-weight: normal; color: #9c9c9c; }
.canvas { display: block; width: 100%; outline: 1px solid #f4f4f4; }
.ink { fill: #f0f0f0; font-family: "Liberation Serif", serif; }
.han { font-family: "Noto Sans CJK SC", sans-serif; font-weight: 300; }
</style>
